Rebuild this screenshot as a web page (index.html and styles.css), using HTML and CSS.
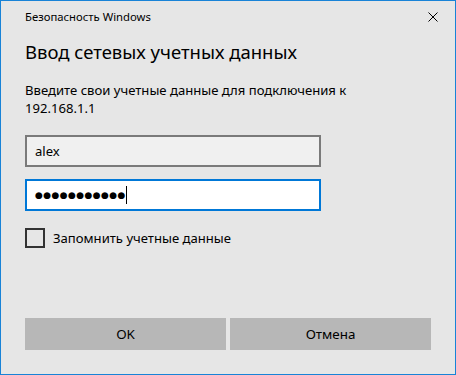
FILE: index.html
```html
<!DOCTYPE html>
<html lang="ru">
<head>
<meta charset="utf-8">
<title>Безопасность Windows</title>
<link rel="stylesheet" href="styles.css">
</head>
<body>
<div class="window">
  <div class="titlebar">
    <span class="title">Безопасность Windows</span>
    <span class="close">
      <svg width="10" height="10" viewBox="0 0 10 10"><path d="M0.5 0.5L9.5 9.5M9.5 0.5L0.5 9.5" stroke="#000" stroke-width="1" fill="none"/></svg>
    </span>
  </div>
  <div class="content">
    <h1 class="heading">Ввод сетевых учетных данных</h1>
    <p class="message">Введите свои учетные данные для подключения к<br>192.168.1.1</p>
    <div class="field user">alex</div>
    <div class="field pass"><span class="dots">●●●●●●●●●●●</span><span class="caret"></span></div>
    <label class="remember"><span class="box"></span><span>Запомнить учетные данные</span></label>
  </div>
  <div class="buttons">
    <div class="btn">OK</div>
    <div class="btn">Отмена</div>
  </div>
</div>
</body>
</html>
```
FILE: styles.css
```css
html, body { margin: 0; padding: 0; }
body { width: 456px; height: 375px; overflow: hidden; }
.window {
  width: 456px; height: 375px; box-sizing: border-box;
  border: 1px solid #1883d7;
  background: #e6e6e6;
  font-family: "Noto Sans", "Open Sans", sans-serif;
  color: #000;
  display: flex; flex-direction: column;
}
.titlebar {
  height: 31px; display: flex; align-items: center; justify-content: space-between;
  padding-left: 24px;
}
.title { font-size: 11.3px; line-height: 16px; color: #000; }
.close { width: 44px; height: 31px; display: flex; align-items: center; justify-content: center; }
.content { padding: 0 24px 0 24px; display: flex; flex-direction: column; }
.heading { margin: 6px 0 0 0; font-size: 18.5px; font-weight: 400; line-height: 28px; }
.message { margin: 15px 0 0 0; font-size: 13.1px; line-height: 18px; }
.field {
  box-sizing: border-box; width: 296px; height: 32px; border: 2px solid #7a7a7a; background: #f0f0f0;
  display: flex; align-items: center; padding-left: 8px; font-size: 13.1px;
}
.user { margin-top: 18px; }
.pass { margin-top: 12px; border-color: #0078d7; background: #fff; }
.dots { font-size: 9px; letter-spacing: 0.4px; font-family: "DejaVu Sans", sans-serif; }
.caret { width: 1px; height: 18px; background: #000; margin-left: 0; }
.remember { margin-top: 17px; display: flex; align-items: center; gap: 8px; font-size: 13.1px; }
.box { width: 20px; height: 20px; box-sizing: border-box; border: 2px solid #333; }
.buttons { margin-top: auto; margin-bottom: 24px; padding: 0 24px; display: flex; gap: 4px; }
.btn { flex: 1; height: 32px; background: #b7b7b7; display: flex; align-items: center; justify-content: center; font-size: 13.4px; }
```
